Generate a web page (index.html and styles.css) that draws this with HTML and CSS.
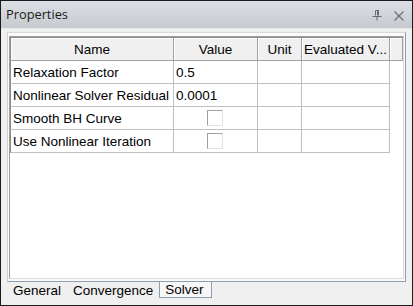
FILE: index.html
```html
<!DOCTYPE html>
<html>
<head>
<meta charset="utf-8">
<link rel="stylesheet" href="styles.css">
</head>
<body>
<div class="window">
  <div class="titlebar">
    <span class="title">Properties</span>
    <div class="tools">
      <svg class="pin" width="10" height="11" viewBox="0 0 10 11">
        <path d="M3.5 0.5 V5.5 M6.5 0.5 V5.5 M3.5 0.5 H7 M0.5 6.5 H9.5 M5 6.5 V10.5" fill="none" stroke="#6a6a6a" stroke-width="1"/>
        <path d="M5.5 0.5 V5.5" stroke="#6a6a6a" stroke-width="1"/>
      </svg>
      <svg class="close" width="10" height="10" viewBox="0 0 10 10">
        <path d="M0.5 0.5 L9.5 9.5 M9.5 0.5 L0.5 9.5" stroke="#6a6a6a" stroke-width="1.1" fill="none"/>
      </svg>
    </div>
  </div>
  <div class="content">
    <div class="panel">
      <div class="grid">
        <div class="row head">
          <div class="cell hc">Name</div>
          <div class="cell hc">Value</div>
          <div class="cell hc">Unit</div>
          <div class="cell hc">Evaluated V...</div>
          <div class="cell hc last"></div>
        </div>
        <div class="row">
          <div class="cell name">Relaxation Factor</div>
          <div class="cell">0.5</div>
          <div class="cell"></div>
          <div class="cell"></div>
          <div class="cell empty"></div>
        </div>
        <div class="row">
          <div class="cell name">Nonlinear Solver Residual</div>
          <div class="cell">0.0001</div>
          <div class="cell"></div>
          <div class="cell"></div>
          <div class="cell empty"></div>
        </div>
        <div class="row">
          <div class="cell name">Smooth BH Curve</div>
          <div class="cell center"><span class="check"></span></div>
          <div class="cell"></div>
          <div class="cell"></div>
          <div class="cell empty"></div>
        </div>
        <div class="row">
          <div class="cell name">Use Nonlinear Iteration</div>
          <div class="cell center"><span class="check"></span></div>
          <div class="cell"></div>
          <div class="cell"></div>
          <div class="cell empty"></div>
        </div>
      </div>
    </div>
    <div class="tabs">
      <span class="tab">General</span>
      <span class="tab">Convergence</span>
      <span class="tab active">Solver</span>
    </div>
  </div>
</div>
</body>
</html>
```
FILE: styles.css
```css
* { box-sizing: border-box; }
html, body { margin: 0; padding: 0; }
body { width: 413px; height: 306px; overflow: hidden; background: #f0f0f0; }

.window {
  width: 413px;
  height: 306px;
  border: 1px solid #1a1a1a;
  background: #f0f0f0;
  display: flex;
  flex-direction: column;
  font-family: "Liberation Sans", Arial, sans-serif;
  font-size: 13.5px;
  color: #000;
}

.titlebar {
  height: 28px;
  flex: none;
  display: flex;
  align-items: center;
  justify-content: space-between;
  padding: 0 8px 0 5px;
  background: linear-gradient(#dcdfe3, #c6cacf);
  border-bottom: 1px solid #e6e8ea;
}
.title {
  font-family: "Open Sans", "Noto Sans", sans-serif;
  font-size: 12.8px;
  color: #1b1b1b;
  padding-bottom: 1px;
}
.tools { display: flex; align-items: center; gap: 12px; padding-top: 2px; }
.tools svg { display: block; }

.content {
  flex: 1;
  display: flex;
  flex-direction: column;
  padding: 3px 6px 0 6px;
}

.panel {
  height: 250px;
  flex: none;
  border: 1px solid #8e9cb4;
  border-top-color: #d9d9d9;
  border-left-color: #d0d0d0;
  padding: 3px 1px 2px 1px;
  background: #fbfbfb;
}

.grid {
  height: 100%;
  background: #fff;
  border: 1px solid #dcdcdc;
  border-top-color: #a0a0a0;
  border-left-color: #a0a0a0;
  display: flex;
  flex-direction: column;
}

.row {
  display: grid;
  grid-template-columns: 164px 84px 44px 88px 1fr;
  height: 23px;
}
.row.head { height: 24px; }

.cell {
  border-right: 1px solid #c0c0c0;
  border-bottom: 1px solid #c0c0c0;
  padding: 0 2px;
  display: flex;
  align-items: center;
  white-space: nowrap;
  overflow: hidden;
}
.cell.name { border-left: 1px solid #8a8a8a; padding-left: 2px; }
.cell.empty { border: none; }
.cell.center { justify-content: center; }

.hc {
  background: #f0f0f0;
  justify-content: center;
  border-right: 1px solid #a0a0a0;
  border-bottom: 1px solid #a0a0a0;
  border-top: 1px solid #8a8a8a;
  box-shadow: inset 1px 1px 0 #fff;
}
.hc:first-child { border-left: 1px solid #8a8a8a; }
.hc.last { border-right: 1px solid #a0a0a0; }

.check {
  width: 16px;
  height: 16px;
  border: 1px solid #e3e3e3;
  border-top-color: #a0a0a0;
  border-left-color: #a0a0a0;
  background: #fff;
  margin-right: 2px;
}

.tabs {
  display: flex;
  height: 16px;
}
.tab {
  padding: 0 6px;
  height: 16px;
  line-height: 17px;
  color: #000;
}
.tab.active {
  border: 1px solid #8e9cb4;
  border-top: none;
  background: #f7f7f7;
  padding: 0 7px 0 5px;
  line-height: 16px;
}
```
